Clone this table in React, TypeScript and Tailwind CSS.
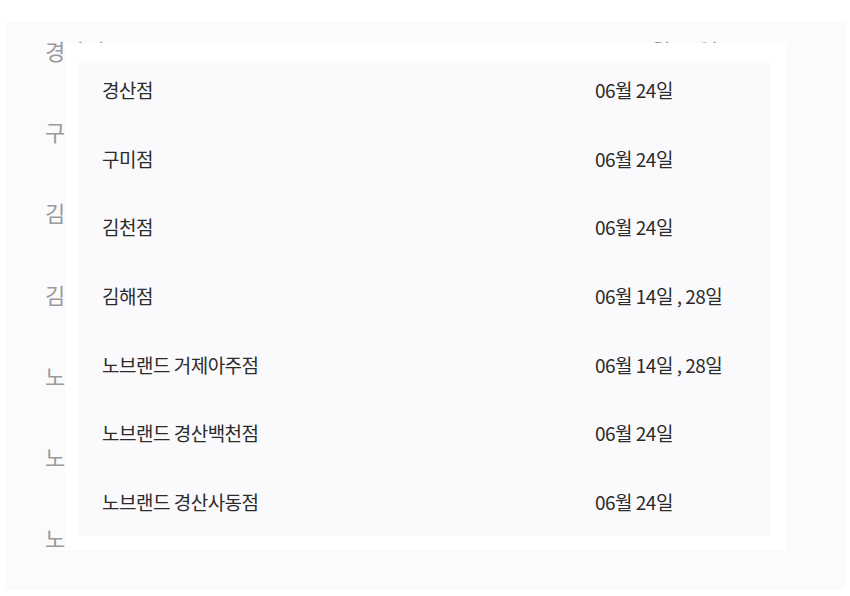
const STORES = [
  { name: "경산점", date: "06월 24일" },
  { name: "구미점", date: "06월 24일" },
  { name: "김천점", date: "06월 24일" },
  { name: "김해점", date: "06월 14일 , 28일" },
  { name: "노브랜드 거제아주점", date: "06월 14일 , 28일" },
  { name: "노브랜드 경산백천점", date: "06월 24일" },
  { name: "노브랜드 경산사동점", date: "06월 24일" },
];

const font = { fontFamily: '"Noto Sans CJK KR", "Noto Sans", sans-serif' };

export default function App() {
  return (
    <div className="relative w-[850px] h-[596px] bg-white overflow-hidden" style={font}>
      {/* page underneath (zoomed list) */}
      <div className="ml-[5px] mt-[22px] w-[840px] h-[568px] bg-[#fbfbfd] overflow-hidden pl-[40px] pt-[12px]">
        {STORES.map((s) => (
          <div key={s.name} className="grid grid-cols-[582px_1fr] h-[81.2px] text-[22px] leading-[32px] text-[#9a9a9a] tracking-[-0.5px]">
            <span>{s.name}</span>
            <span>{s.date}</span>
          </div>
        ))}
      </div>

      {/* popup */}
      <div className="absolute left-[65px] top-[43px] w-[721px] h-[507px] bg-white pt-[20px] pl-[14px]">
        <div className="w-[692px] h-[473px] bg-[#fafafc] pl-[23px] pt-[13px] overflow-hidden">
          {STORES.map((s) => (
            <div key={s.name} className="grid grid-cols-[493px_1fr] h-[68.7px] text-[19px] leading-[28px] text-[#2b2b2b] tracking-[-0.5px]">
              <span>{s.name}</span>
              <span>{s.date}</span>
            </div>
          ))}
        </div>
      </div>
    </div>
  );
}
